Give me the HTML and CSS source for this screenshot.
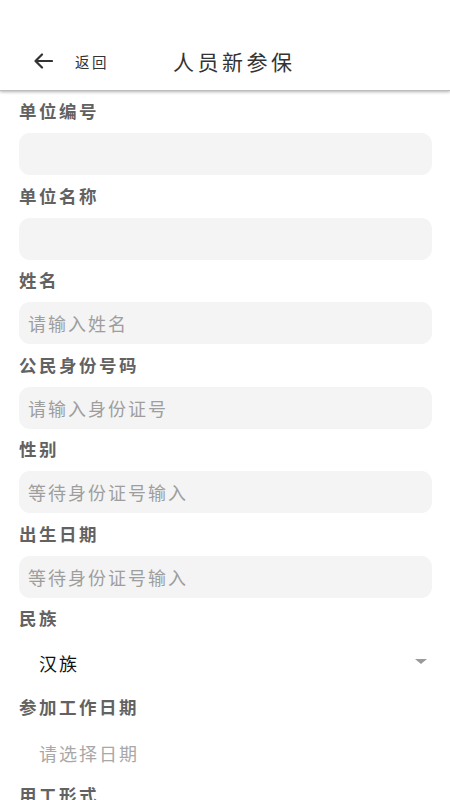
FILE: index.html
```html
<!DOCTYPE html>
<html lang="zh">
<head>
<meta charset="utf-8">
<title>人员新参保</title>
<link rel="stylesheet" href="styles.css">
</head>
<body>
<header class="header">
  <div class="toolbar">
    <svg class="back-icon" width="20" height="16" viewBox="0 0 20 16"><path d="M19 8H2.5M9 1.5L2.5 8L9 14.5" fill="none" stroke="#333" stroke-width="2.2" stroke-linecap="round" stroke-linejoin="round"/></svg>
    <span class="back-text">返回</span>
    <span class="title">人员新参保</span>
  </div>
</header>
<main class="form">
  <div class="field">
    <div class="label">单位编号</div>
    <div class="input"></div>
  </div>
  <div class="field">
    <div class="label">单位名称</div>
    <div class="input"></div>
  </div>
  <div class="field">
    <div class="label">姓名</div>
    <div class="input"><span class="placeholder">请输入姓名</span></div>
  </div>
  <div class="field">
    <div class="label">公民身份号码</div>
    <div class="input"><span class="placeholder">请输入身份证号</span></div>
  </div>
  <div class="field">
    <div class="label">性别</div>
    <div class="input"><span class="placeholder">等待身份证号输入</span></div>
  </div>
  <div class="field">
    <div class="label">出生日期</div>
    <div class="input"><span class="placeholder">等待身份证号输入</span></div>
  </div>
  <div class="field">
    <div class="label">民族</div>
    <div class="select">
      <span class="select-value">汉族</span>
      <span class="caret"></span>
    </div>
  </div>
  <div class="field">
    <div class="label">参加工作日期</div>
    <div class="date"><span class="date-placeholder">请选择日期</span></div>
  </div>
  <div class="field">
    <div class="label">用工形式</div>
  </div>
</main>
</body>
</html>
```

FILE: styles.css
```css
* { box-sizing: border-box; }
html, body {
  margin: 0;
  padding: 0;
  background: #ffffff;
  font-family: "Noto Sans CJK SC", "Noto Sans", sans-serif;
  overflow: hidden;
}
.header {
  height: 91px;
  padding-top: 33px;
  background: #fff;
  border-bottom: 1px solid #bdbdbd;
  box-shadow: 0 1px 3px rgba(0,0,0,0.3);
  position: relative;
  z-index: 1;
}
.toolbar {
  height: 56px;
  display: flex;
  align-items: center;
  padding-left: 33px;
}
.back-icon { display: block; flex: none; }
.back-text {
  margin-left: 22px;
  font-size: 14.5px;
  letter-spacing: 2.5px;
  color: #333;
}
.title {
  margin-left: 64px;
  font-size: 21px;
  letter-spacing: 3.5px;
  color: #333;
}
.form {
  padding: 7px 18px 0 19px;
}
.field {
  margin-bottom: 7.5px;
}
.label {
  height: 26px;
  line-height: 26px;
  font-size: 17.5px;
  font-weight: bold;
  letter-spacing: 2.5px;
  color: #626262;
  margin-bottom: 9px;
}
.input {
  height: 42px;
  background: #f4f4f4;
  border-radius: 11px;
  display: flex;
  align-items: center;
  padding-left: 9px;
}
.placeholder {
  font-size: 18px;
  letter-spacing: 2px;
  color: #9e9e9e;
}
.select {
  height: 46px;
  display: flex;
  align-items: center;
  justify-content: space-between;
  padding: 0 5px 0 20px;
  margin-bottom: 1.5px;
}
.select-value {
  font-size: 18px;
  letter-spacing: 2px;
  color: #111;
}
.caret {
  width: 0;
  height: 0;
  border-left: 6px solid transparent;
  border-right: 6px solid transparent;
  border-top: 5px solid #9a9a9a;
  margin-top: -4px;
}
.date {
  height: 46px;
  display: flex;
  align-items: center;
  padding: 3px 0 0 20px;
  margin-bottom: 6px;
}
.date-placeholder {
  font-size: 18px;
  letter-spacing: 2px;
  color: #a8a8a8;
}
```
